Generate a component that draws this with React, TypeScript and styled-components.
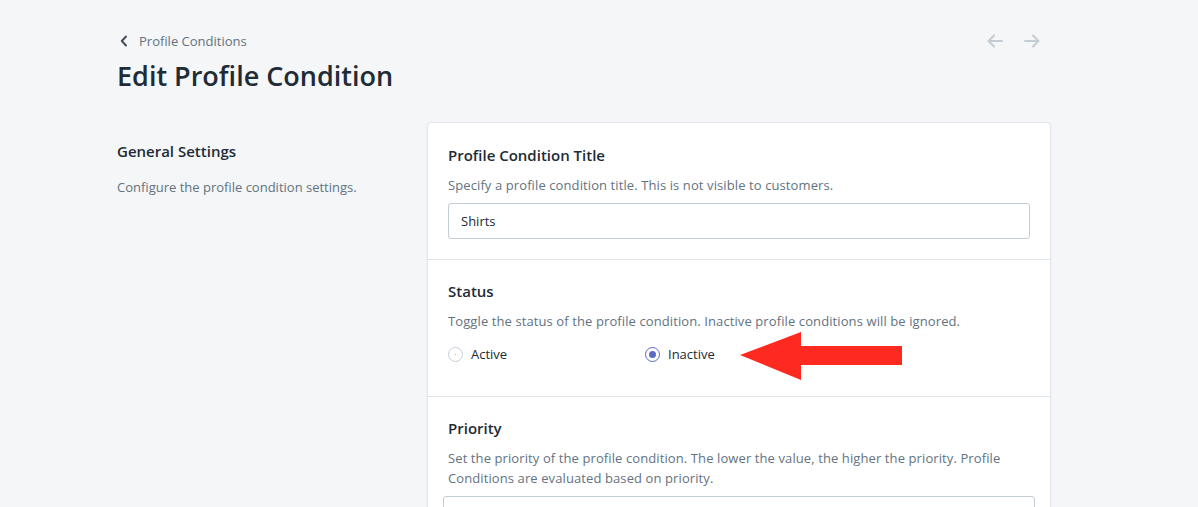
import React from "react";
import styled, { createGlobalStyle } from "styled-components";

const Global = createGlobalStyle`
  html, body { margin: 0; padding: 0; background: #f4f6f8; }
  body { font-family: "Open Sans", "Noto Sans", sans-serif; color: #212b36; -webkit-font-smoothing: antialiased; }
  * { box-sizing: border-box; }
`;

const Page = styled.div`
  width: 1198px;
  height: 507px;
  overflow: hidden;
  position: relative;
  background: #f4f6f8;
`;

const Container = styled.div`
  width: 934px;
  margin-left: 117px;
  padding-top: 31px;
`;

const HeaderRow = styled.div`
  display: flex;
  justify-content: space-between;
  align-items: flex-start;
`;

const HeaderMain = styled.div`
  display: flex;
  flex-direction: column;
`;

const Breadcrumb = styled.a`
  display: flex;
  align-items: center;
  gap: 11px;
  padding-left: 3px;
  font-size: 13px;
  line-height: 20px;
  color: #637381;
  text-decoration: none;
  height: 20px;
`;

const Title = styled.h1`
  margin: 7px 0 0;
  font-size: 27px;
  line-height: 36px;
  font-weight: 600;
  color: #212b36;
`;

const Pager = styled.div`
  display: flex;
  gap: 21px;
  padding-top: 3px;
  margin-right: 11px;
`;

const Layout = styled.div`
  display: grid;
  grid-template-columns: 310px 624px;
  margin-top: 28px;
`;

const Aside = styled.div`
  padding-top: 19px;
`;

const AsideTitle = styled.h2`
  margin: 0;
  font-size: 15px;
  line-height: 20px;
  font-weight: 600;
  color: #212b36;
`;

const AsideText = styled.p`
  margin: 16px 0 0;
  font-size: 13px;
  line-height: 20px;
  color: #637381;
`;

const Card = styled.div`
  background: #fff;
  border: 1px solid #e3e7eb;
  border-radius: 4px;
  box-shadow: 0 1px 2px rgba(63, 63, 68, 0.08);
`;

const Section = styled.div`
  padding: 21px 20px 20px;
  &:first-child { padding-top: 22px; }
  & + & { border-top: 1px solid #dfe3e8; }
`;

const SectionTitle = styled.h3`
  margin: 0;
  font-size: 15px;
  line-height: 20px;
  font-weight: 600;
  color: #212b36;
`;

const SectionText = styled.p`
  margin: 10px 0 0;
  font-size: 13px;
  line-height: 20px;
  color: #637381;
  letter-spacing: 0.1px;
`;

const Input = styled.div<{ $wide?: boolean }>`
  margin-top: 8px;
  margin-left: ${(p) => (p.$wide ? "-5px" : "0")};
  margin-right: ${(p) => (p.$wide ? "-5px" : "0")};
  height: 36px;
  border: 1px solid #c4cdd5;
  border-radius: 3px;
  padding: 0 12px;
  display: flex;
  align-items: center;
  font-size: 13px;
  color: #212b36;
  background: #fff;
`;

const RadioRow = styled.div`
  display: grid;
  grid-template-columns: 197px 1fr;
  margin-top: 13px;
  margin-bottom: 12px;
`;

const RadioLabel = styled.label`
  display: flex;
  align-items: center;
  gap: 8px;
  font-size: 13px;
  line-height: 20px;
  color: #212b36;
`;

const RadioDot = styled.span<{ $checked?: boolean }>`
  width: 15px;
  height: 15px;
  border-radius: 50%;
  border: 1px solid ${(p) => (p.$checked ? "#5c6ac4" : "#c4cdd5")};
  background: #fff;
  display: flex;
  align-items: center;
  justify-content: center;
  &::after {
    content: "";
    width: ${(p) => (p.$checked ? "7px" : "1px")};
    height: ${(p) => (p.$checked ? "7px" : "1px")};
    border-radius: 50%;
    background: ${(p) => (p.$checked ? "#5c6ac4" : "#8a9bd0")};
  }
`;

const Callout = styled.svg`
  position: absolute;
  left: 739px;
  top: 331px;
`;

const Chevron = () => (
  <svg width="8" height="12" viewBox="0 0 8 12">
    <path d="M6 1.5 L1.8 6 L6 10.5" fill="none" stroke="#454f5b" strokeWidth="2" strokeLinecap="round" strokeLinejoin="round" />
  </svg>
);

const Arrow = ({ dir }: { dir: "left" | "right" }) => (
  <svg width="16" height="14" viewBox="0 0 16 14" style={{ transform: dir === "right" ? "scaleX(-1)" : undefined }}>
    <path d="M15 7 H1.5 M7 1.5 L1.5 7 L7 12.5" fill="none" stroke="#c4cdd5" strokeWidth="2" strokeLinecap="round" strokeLinejoin="round" />
  </svg>
);

export default function App() {
  return (
    <Page>
      <Global />
      <Container>
        <HeaderRow>
          <HeaderMain>
            <Breadcrumb>
              <Chevron />
              Profile Conditions
            </Breadcrumb>
            <Title>Edit Profile Condition</Title>
          </HeaderMain>
          <Pager>
            <Arrow dir="left" />
            <Arrow dir="right" />
          </Pager>
        </HeaderRow>
        <Layout>
          <Aside>
            <AsideTitle>General Settings</AsideTitle>
            <AsideText>Configure the profile condition settings.</AsideText>
          </Aside>
          <Card>
            <Section>
              <SectionTitle>Profile Condition Title</SectionTitle>
              <SectionText>Specify a profile condition title. This is not visible to customers.</SectionText>
              <Input>Shirts</Input>
            </Section>
            <Section>
              <SectionTitle>Status</SectionTitle>
              <SectionText>Toggle the status of the profile condition. Inactive profile conditions will be ignored.</SectionText>
              <RadioRow>
                <RadioLabel>
                  <RadioDot />
                  Active
                </RadioLabel>
                <RadioLabel>
                  <RadioDot $checked />
                  Inactive
                </RadioLabel>
              </RadioRow>
            </Section>
            <Section>
              <SectionTitle>Priority</SectionTitle>
              <SectionText>
                Set the priority of the profile condition. The lower the value, the higher the priority. Profile Conditions are evaluated based on priority.
              </SectionText>
              <Input $wide />
            </Section>
          </Card>
        </Layout>
      </Container>
      <Callout width="164" height="50" viewBox="0 0 164 50">
        <polygon points="1,24 62,1 62,15 163,15 163,34 62,34 62,49" fill="#ff2a1f" />
      </Callout>
    </Page>
  );
}
